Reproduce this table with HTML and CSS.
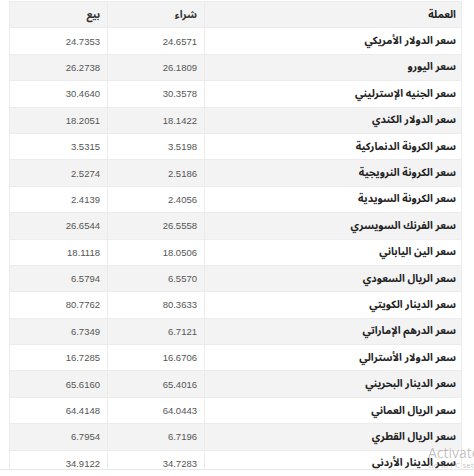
FILE: index.html
```html
<!DOCTYPE html>
<html lang="ar" dir="rtl">
<head>
<meta charset="utf-8">
<link rel="stylesheet" href="styles.css">
</head>
<body>
<div class="frame">
<table class="rates">
<colgroup><col class="c-name"><col class="c-num"><col class="c-num2"></colgroup>
<tbody>
<tr class="head"><th class="name">العملة</th><th>شراء</th><th>بيع</th></tr>
<tr><td class="name">سعر الدولار الأمريكي</td><td>24.6571</td><td>24.7353</td></tr>
<tr><td class="name">سعر اليورو</td><td>26.1809</td><td>26.2738</td></tr>
<tr><td class="name">سعر الجنيه الإسترليني</td><td>30.3578</td><td>30.4640</td></tr>
<tr><td class="name">سعر الدولار الكندي</td><td>18.1422</td><td>18.2051</td></tr>
<tr><td class="name">سعر الكرونة الدنماركية</td><td>3.5198</td><td>3.5315</td></tr>
<tr><td class="name">سعر الكرونة النرويجية</td><td>2.5186</td><td>2.5274</td></tr>
<tr><td class="name">سعر الكرونة السويدية</td><td>2.4056</td><td>2.4139</td></tr>
<tr><td class="name">سعر الفرنك السويسري</td><td>26.5558</td><td>26.6544</td></tr>
<tr><td class="name">سعر الين الياباني</td><td>18.0506</td><td>18.1118</td></tr>
<tr><td class="name">سعر الريال السعودي</td><td>6.5570</td><td>6.5794</td></tr>
<tr><td class="name">سعر الدينار الكويتي</td><td>80.3633</td><td>80.7762</td></tr>
<tr><td class="name">سعر الدرهم الإماراتي</td><td>6.7121</td><td>6.7349</td></tr>
<tr><td class="name">سعر الدولار الأسترالي</td><td>16.6706</td><td>16.7285</td></tr>
<tr><td class="name">سعر الدينار البحريني</td><td>65.4016</td><td>65.6160</td></tr>
<tr><td class="name">سعر الريال العماني</td><td>64.0443</td><td>64.4148</td></tr>
<tr><td class="name">سعر الريال القطري</td><td>6.7196</td><td>6.7954</td></tr>
<tr><td class="name">سعر الدينار الأردني</td><td>34.7283</td><td>34.9122</td></tr>
</tbody>
</table>
</div>
<div class="watermark" dir="ltr"><span class="wm-big">Activate W</span><span class="wm-small">Go to PC settings</span></div>
</body>
</html>
```
FILE: styles.css
```css
html, body {
  margin: 0;
  padding: 0;
  background: #fff;
  overflow: hidden;
}
.frame {
  height: 468px;
  overflow: hidden;
  border-bottom: 1px solid #e6e6e6;
  padding: 1px 12px 0 10px;
}
.rates {
  width: 452px;
  table-layout: fixed;
  border-collapse: collapse;
  font-family: "Liberation Sans", Arial, sans-serif;
  font-size: 9.5px;
  color: #555;
}
.c-name { width: 257px; }
.c-num { width: 97px; }
.c-num2 { width: 98px; }
.rates tr {
  height: 26.4px;
}
.rates tr:nth-child(odd) {
  background: #f3f3f3;
}
.rates td, .rates th {
  border: 1px solid #ececec;
  padding: 0 7px;
  text-align: right;
  vertical-align: middle;
  font-weight: normal;
  white-space: nowrap;
  overflow: hidden;
}
.rates th {
  font-family: "Noto Sans Arabic", "Noto Kufi Arabic", "Noto Naskh Arabic", "DejaVu Sans", sans-serif;
  font-weight: bold;
  color: #333;
  font-size: 10.5px;
}
.rates .name {
  font-family: "Noto Sans Arabic", "Noto Kufi Arabic", "Noto Naskh Arabic", "DejaVu Sans", sans-serif;
  font-weight: bold;
  color: #222;
  font-size: 10.5px;
  padding-right: 5px;
}
.watermark {
  position: absolute;
  left: 428px;
  top: 446px;
  display: flex;
  flex-direction: column;
  font-family: "Open Sans", sans-serif;
  color: rgba(120, 120, 120, 0.45);
  white-space: nowrap;
  line-height: 1;
}
.wm-big {
  font-size: 14px;
}
.wm-small {
  font-size: 8px;
  margin-top: 1px;
}
```
